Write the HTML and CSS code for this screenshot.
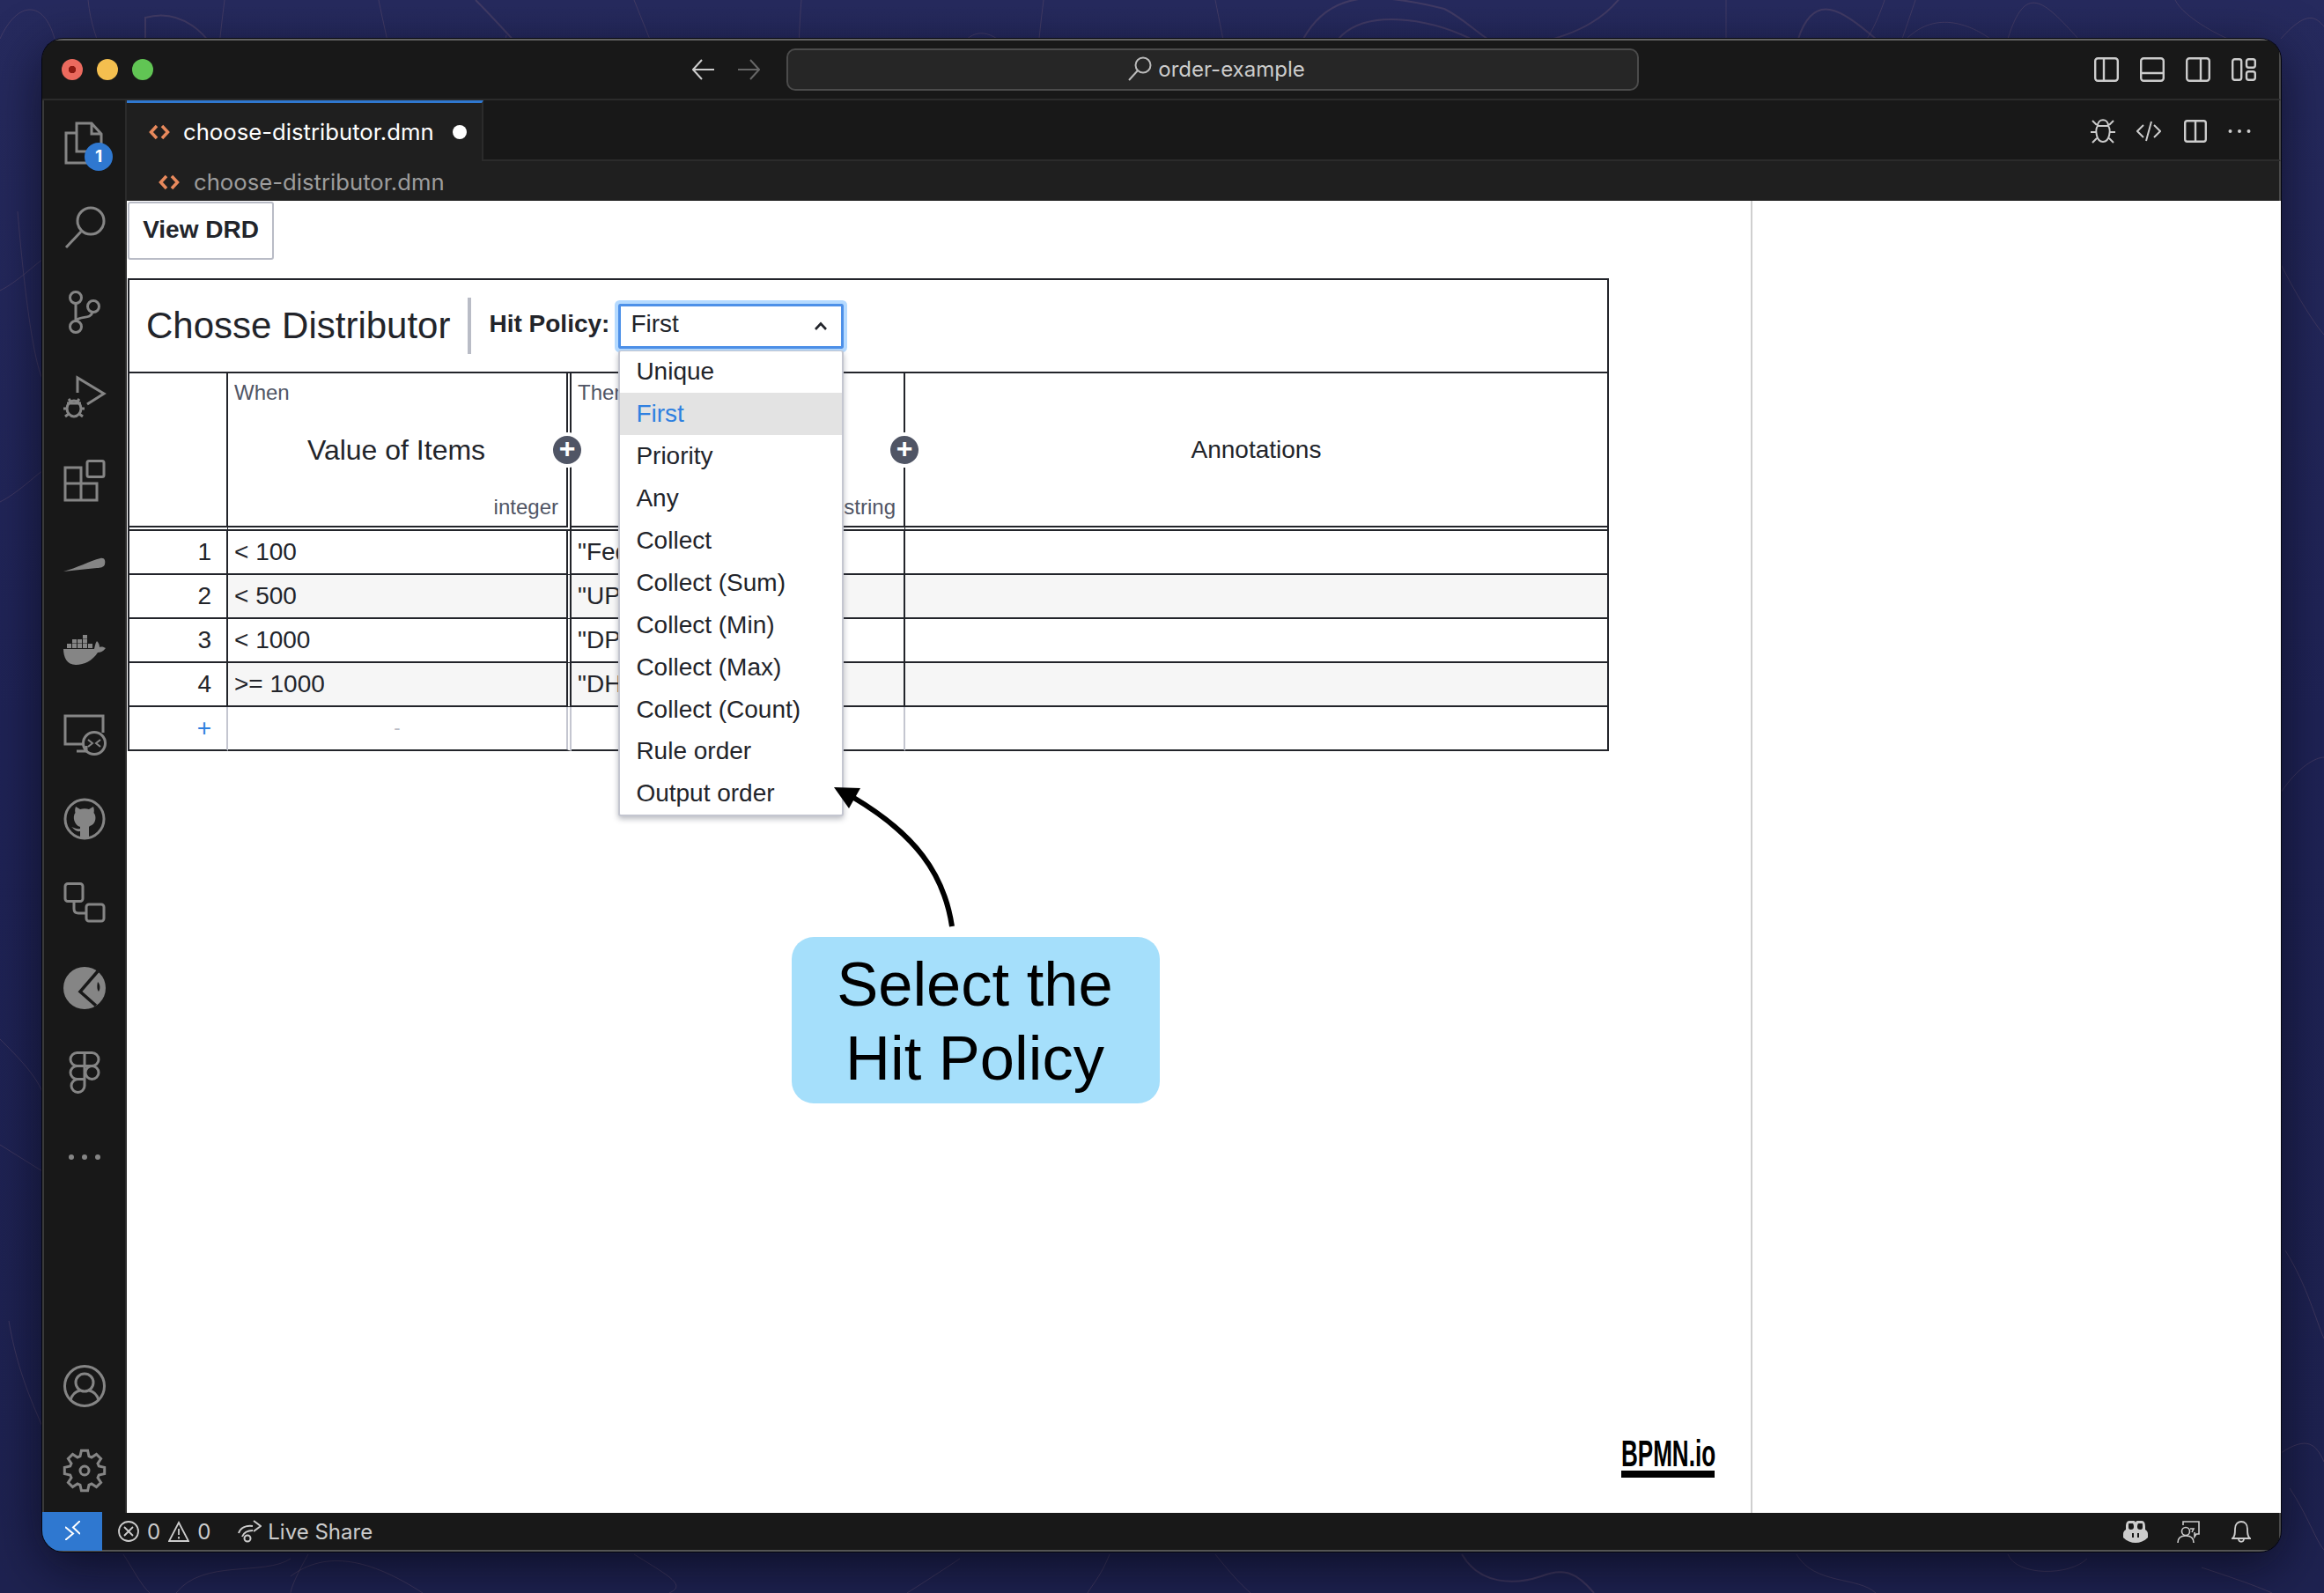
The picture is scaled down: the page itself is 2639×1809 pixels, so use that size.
FILE: index.html
```html
<!DOCTYPE html>
<html lang="en">
<head>
    <meta charset="UTF-8">
    <title>choose-distributor.dmn - order-example</title>
    <link rel="stylesheet" href="styles.css">
</head>
<body>
    <svg class="wallpaper" width="2639" height="1809" fill="none" stroke="#6b5670" stroke-opacity="0.4">
        <path d="M0 44C20 0 50 0 62 44"/>
        <path d="M100 0C105 50 130 90 150 110"/>
        <path d="M165 70V20C200 10 240 30 258 90" stroke-width="2"/>
        <path d="M255 0C250 40 245 80 245 130"/>
        <path d="M430 0C440 50 460 130 480 220"/>
        <path d="M540 0C600 60 700 180 740 220" stroke-width="2"/>
        <path d="M575 40C560 100 560 180 565 220"/>
        <path d="M580 220C590 170 620 140 640 220"/>
        <path d="M720 0C760 100 790 170 800 220"/>
        <path d="M892 220C920 100 1000 90 1035 220" stroke-width="2"/>
        <path d="M910 0C905 60 905 150 910 220"/>
        <path d="M1043 220C1070 60 1100 -30 1178 100C1195 150 1205 200 1210 220"/>
        <path d="M1185 0C1175 80 1170 160 1165 220"/>
        <path d="M1380 0C1400 100 1415 180 1420 220"/>
        <path d="M1480 44C1510 -10 1560 -10 1640 10C1680 30 1700 70 1740 50C1790 40 1830 20 1851 -20" stroke-width="2"/>
        <path d="M1520 44C1550 10 1620 20 1670 44" stroke-width="2"/>
        <path d="M1960 0V44M2140 0C2130 30 2120 44 2120 44M2175 0C2165 30 2160 44 2160 44"/>
        <path d="M2042 44C2060 -10 2090 10 2130 44" stroke-width="2"/>
        <path d="M2165 44C2200 10 2240 30 2260 44"/>
        <path d="M2280 44C2300 -20 2320 0 2360 44"/>
        <path d="M2470 0C2480 20 2520 40 2530 44M2590 44C2620 10 2630 20 2639 30"/>
        <path d="M0 330C20 320 40 300 48 295M0 570C20 560 40 540 48 535M20 240C25 300 35 400 48 430"/>
        <path d="M0 1180C20 1200 40 1220 48 1240M0 1300L48 1330M10 1500C20 1560 40 1600 48 1620"/>
        <path d="M2590 300C2610 340 2630 370 2639 380M2590 900C2610 870 2630 860 2639 860M2595 1420C2620 1460 2630 1500 2639 1520"/>
        <path d="M2590 1650C2620 1630 2630 1640 2639 1660M2600 1690C2620 1720 2630 1750 2639 1760"/>
        <path d="M140 1765C150 1780 160 1800 170 1809M200 1809C230 1770 300 1790 330 1770"/>
        <path d="M330 1790C370 1760 420 1770 480 1809M350 1765C330 1800 330 1809 330 1809"/>
        <path d="M720 1765C760 1790 780 1800 760 1809M1030 1809C1060 1790 1090 1770 1090 1770"/>
        <path d="M1260 1765C1250 1790 1240 1800 1235 1809M1380 1765C1400 1790 1410 1800 1420 1809"/>
        <path d="M1660 1765C1680 1800 1720 1800 1750 1790C1775 1780 1790 1785 1810 1809" stroke-width="2"/>
        <path d="M2040 1765C2060 1800 2110 1790 2130 1809M2280 1765C2290 1790 2350 1790 2370 1770"/>
        <path d="M2500 1780C2530 1790 2560 1800 2580 1809"/>
    </svg>

    <div class="window">
        <header class="titlebar">
            <div class="traffic">
                <span class="light light-red"></span>
                <span class="light light-yellow"></span>
                <span class="light light-green"></span>
            </div>
            <div class="history">
                <svg width="26" height="26" viewBox="0 0 26 26" fill="none" stroke="#ccc" stroke-width="2"><path d="M1 13H25M11 2L1 13L11 24"/></svg>
                <svg width="26" height="26" viewBox="0 0 26 26" fill="none" stroke="#666" stroke-width="2"><path d="M1 13H25M15 2L25 13L15 24"/></svg>
            </div>
            <div class="search-box">
                <svg width="28" height="28" viewBox="0 0 28 28" fill="none" stroke="#bbb" stroke-width="2"><circle cx="18" cy="10" r="8.5"/><path d="M12 16L2 27"/></svg>
                <span>order-example</span>
            </div>
            <div class="layout-icons">
                <svg width="28" height="28" viewBox="0 0 28 28" fill="none" stroke="#ccc" stroke-width="2.4"><rect x="1.2" y="1.2" width="25.6" height="25.6" rx="3"/><path d="M11 1V27"/></svg>
                <svg width="28" height="28" viewBox="0 0 28 28" fill="none" stroke="#ccc" stroke-width="2.4"><rect x="1.2" y="1.2" width="25.6" height="25.6" rx="3"/><path d="M1 18H27"/></svg>
                <svg width="28" height="28" viewBox="0 0 28 28" fill="none" stroke="#ccc" stroke-width="2.4"><rect x="1.2" y="1.2" width="25.6" height="25.6" rx="3"/><path d="M17 1V27"/></svg>
                <svg width="28" height="28" viewBox="0 0 28 28" fill="none" stroke="#ccc" stroke-width="2.4"><rect x="1.2" y="2.2" width="10" height="23.6" rx="2.5"/><rect x="17" y="2.2" width="9.8" height="9.5" rx="2.5"/><rect x="17" y="16.3" width="9.8" height="9.5" rx="2.5"/></svg>
            </div>
        </header>

        <div class="main">
            <aside class="activity">
                <div class="act-item">
                    <svg class="act-icon" viewBox="0 0 48 48"><path d="M15 2H32L43 14V34H15ZM32 2V14H43M15 13H3V47H30V34"/></svg>
                    <span class="badge">1</span>
                </div>
                <div class="act-item">
                    <svg class="act-icon" viewBox="0 0 48 48"><circle cx="31" cy="17" r="15"/><path d="M20 29L3 47"/></svg>
                </div>
                <div class="act-item">
                    <svg class="act-icon" viewBox="0 0 48 48"><circle cx="14" cy="8" r="6.5"/><circle cx="14" cy="41" r="6.5"/><circle cx="34" cy="18" r="6.5"/><path d="M14 14.5V34.5M33 24.5C31 33 20 28 14 34"/></svg>
                </div>
                <div class="act-item">
                    <svg class="act-icon" viewBox="0 0 48 48"><path d="M16 20V3L46 21L27 33"/><ellipse cx="12" cy="38" rx="8" ry="9"/><path d="M6 27L9 31M18 27L15 31M0 38H4M20 38H24M2 47L6 44M22 47L18 44M4 32H20"/></svg>
                </div>
                <div class="act-item">
                    <svg class="act-icon" viewBox="0 0 48 48"><path d="M2 9H20V27H38V46H2ZM2 27H20V46"/><rect x="27" y="1.5" width="19" height="18" rx="2"/></svg>
                </div>
                <div class="act-item">
                    <svg class="act-fill" viewBox="0 0 48 48"><path d="M0 31C15 27 30 19 42 16C47 15 48 19 47 23C46 26 42 27 38 27C25 28 12 30 0 31Z"/></svg>
                </div>
                <div class="act-item">
                    <svg class="act-fill" viewBox="0 0 48 48"><path d="M0 23H35C36 19 36 17 38 14C40 16 41 18 41 21C44 20 46 21 48 22C45 26 42 27 39 27C33 36 24 41 14 41C4 41 0 32 0 23Z"/><path d="M4 17h5v5h-5zM10 17h5v5h-5zM16 17h5v5h-5zM22 17h5v5h-5zM28 17h5v5h-5zM10 12h5v4.500h-5zM16 12h5v4.500h-5zM22 12h5v4.500h-5zM22 7h5v4.500h-5z"/></svg>
                </div>
                <div class="act-item">
                    <svg class="act-icon" viewBox="0 0 48 48"><path d="M22 35H2V3H45V22M15 43H26V37"/><circle cx="35" cy="34" r="12.500"/><path d="M28 30L33 34L28 38M42 30L37 34L42 38" stroke-width="2"/></svg>
                </div>
                <div class="act-item">
                    <svg class="act-icon" viewBox="0 0 48 48"><circle cx="24" cy="24" r="22"/><path class="act-solid" d="M14 10L19 13C22 12 26 12 29 13L34 10C35 13 35 15 34.500 17C38 21 37 30 30 32L29 33V45H19V38C14 39 12 35 9 33C13 34 15 36 19 35V33C12 31 10 21 13.500 17C13 15 13 13 14 10Z"/></svg>
                </div>
                <div class="act-item">
                    <svg class="act-icon" viewBox="0 0 48 48"><rect x="2" y="1.500" width="20" height="20" rx="3"/><rect x="26" y="25" width="20" height="19" rx="3"/><path d="M12 21.500V30Q12 35 17 35H26"/></svg>
                </div>
                <div class="act-item">
                    <svg class="act-fill" viewBox="0 0 48 48"><circle cx="24" cy="24" r="24"/><path d="M39 5L19 28L37 44" fill="none" stroke="#181818" stroke-width="3.500"/><path d="M39 17C42 20 42 25 40 28C38 26 38 21 39 17Z" fill="#181818"/></svg>
                </div>
                <div class="act-item">
                    <svg class="act-icon" viewBox="0 0 48 48"><path d="M24 1.500H15.500A7.500 7.500 0 0 0 15.500 16.500H24ZM24 1.500H32.500A7.500 7.500 0 0 1 32.500 16.500H24ZM24 16.500H15.500A7.500 7.500 0 0 0 15.500 31.500H24ZM24 31.500V39A7.500 7.500 0 1 1 16.500 31.500H24"/><circle cx="32.500" cy="24" r="7.500"/></svg>
                </div>
                <div class="act-item">
                    <svg class="act-fill" viewBox="0 0 48 48"><circle cx="9" cy="24" r="3"/><circle cx="24" cy="24" r="3"/><circle cx="39" cy="24" r="3"/></svg>
                </div>
                <div class="act-item act-bottom">
                    <svg class="act-icon" viewBox="0 0 48 48"><circle cx="24" cy="24" r="22.500"/><circle cx="24" cy="20" r="10"/><path d="M8 40C10 33 14 30 19 29M40 40C38 33 34 30 29 29"/></svg>
                </div>
                <div class="act-item">
                    <svg class="act-icon" viewBox="0 0 48 48"><polygon transform="translate(24 24)" points="3.600,22.700 5,16.300 8,15 13.500,18.600 18.600,13.500 15,8 16.300,5 22.700,3.600 22.700,-3.600 16.300,-5 15,-8 18.600,-13.500 13.500,-18.600 8,-15 5,-16.300 3.600,-22.700 -3.600,-22.700 -5,-16.300 -8,-15 -13.500,-18.600 -18.600,-13.500 -15,-8 -16.300,-5 -22.700,-3.600 -22.700,3.600 -16.300,5 -15,8 -18.600,13.500 -13.500,18.600 -8,15 -5,16.300 -3.600,22.700"/><circle cx="24" cy="24" r="5"/></svg>
                </div>
            </aside>

            <div class="editor-area">
                <div class="tabs">
                    <div class="tab">
                        <span class="file-icon">
                            <svg width="24" height="18" viewBox="0 0 24 18" fill="none" stroke="#e8895c" stroke-width="3.500"><path d="M9 2L2.500 9L9 16M15 2L21.500 9L15 16"/></svg>
                        </span>
                        <span class="tab-name">choose-distributor.dmn</span>
                        <span class="dirty"></span>
                    </div>
                    <div class="tab-actions">
                        <svg width="28" height="28" viewBox="0 0 28 28" fill="none" stroke="#ccc" stroke-width="2"><path d="M8 8C8 -1 20 -1 20 8M8 8H20C23 12 22 26 14 26C6 26 5 12 8 8ZM2 2L7 7M26 2L21 7M0 15H6M22 15H28M2 27L7 22M26 27L21 22"/></svg>
                        <svg class="code-icon" width="28" height="28" viewBox="0 0 28 28" fill="none" stroke="#ccc" stroke-width="2"><path d="M8 7L1 14L8 21M20 7L27 14L20 21M17 3L11 25"/></svg>
                        <svg width="26" height="26" viewBox="0 0 26 26" fill="none" stroke="#ccc" stroke-width="2.400"><rect x="1.200" y="1.200" width="23.600" height="23.600" rx="2.500"/><path d="M13 1V25"/></svg>
                        <svg width="26" height="26" viewBox="0 0 26 26" fill="#ccc"><circle cx="2.500" cy="13" r="2"/><circle cx="13" cy="13" r="2"/><circle cx="23.500" cy="13" r="2"/></svg>
                    </div>
                </div>
                <div class="breadcrumb">
                    <svg width="24" height="18" viewBox="0 0 24 18" fill="none" stroke="#e8895c" stroke-width="3.500"><path d="M9 2L2.500 9L9 16M15 2L21.500 9L15 16"/></svg>
                    <span>choose-distributor.dmn</span>
                </div>

                <div class="editor">
                    <div class="dmn-pane">
                        <button class="view-drd">View DRD</button>

                        <div class="decision">
                            <div class="decision-head">
                                <h1 class="decision-name">Chosse Distributor</h1>
                                <span class="head-divider"></span>
                                <span class="policy-label">Hit Policy:</span>
                                <div class="policy">
                                    <div class="policy-select">
                                        <span>First</span>
                                        <svg width="16" height="10" viewBox="0 0 16 10" fill="none" stroke="#22242a" stroke-width="2.600"><path d="M2 9L8 2.500L14 9"/></svg>
                                    </div>
                                    <ul class="policy-menu">
                                        <li>Unique</li>
                                        <li class="selected">First</li>
                                        <li>Priority</li>
                                        <li>Any</li>
                                        <li>Collect</li>
                                        <li>Collect (Sum)</li>
                                        <li>Collect (Min)</li>
                                        <li>Collect (Max)</li>
                                        <li>Collect (Count)</li>
                                        <li>Rule order</li>
                                        <li>Output order</li>
                                    </ul>
                                </div>
                            </div>

                            <table class="rules">
                                <colgroup>
                                    <col class="col-num">
                                    <col class="col-when">
                                    <col class="col-then">
                                    <col>
                                </colgroup>
                                <thead>
                                    <tr>
                                        <th></th>
                                        <th class="col-double">
                                            <div class="clause">
                                                <span class="clause-kind">When</span>
                                                <span class="clause-name">Value of Items</span>
                                                <span class="clause-type">integer</span>
                                            </div>
                                            <span class="add-col">+</span>
                                        </th>
                                        <th>
                                            <div class="clause">
                                                <span class="clause-kind">Then</span>
                                                <span class="clause-name"></span>
                                                <span class="clause-type">string</span>
                                            </div>
                                            <span class="add-col">+</span>
                                        </th>
                                        <th class="annotations">Annotations</th>
                                    </tr>
                                </thead>
                                <tbody>
                                    <tr>
                                        <td class="num">1</td>
                                        <td class="col-double">&lt; 100</td>
                                        <td>"Fed</td>
                                        <td></td>
                                    </tr>
                                    <tr>
                                        <td class="num">2</td>
                                        <td class="col-double">&lt; 500</td>
                                        <td>"UPS"</td>
                                        <td></td>
                                    </tr>
                                    <tr>
                                        <td class="num">3</td>
                                        <td class="col-double">&lt; 1000</td>
                                        <td>"DPD"</td>
                                        <td></td>
                                    </tr>
                                    <tr>
                                        <td class="num">4</td>
                                        <td class="col-double">&gt;= 1000</td>
                                        <td>"DHL"</td>
                                        <td></td>
                                    </tr>
                                    <tr class="add-row">
                                        <td class="num add-rule">+</td>
                                        <td class="col-double dash">-</td>
                                        <td></td>
                                        <td></td>
                                    </tr>
                                </tbody>
                            </table>
                        </div>

                        <svg class="arrow" width="150" height="170" viewBox="0 0 150 170" fill="none">
                            <path d="M137 160C128 100 95 55 24 13" stroke="#000" stroke-width="6"/>
                            <path d="M3 2L33 3L20 26Z" fill="#000"/>
                        </svg>
                        <div class="callout">Select the<br>Hit Policy</div>

                        <div class="bpmn-logo">
                            <span>BPMN.io</span>
                        </div>
                    </div>
                    <div class="side-pane"></div>
                </div>
            </div>
        </div>

        <footer class="statusbar">
            <div class="remote">
                <svg width="17" height="22" viewBox="0 0 17 22" fill="none" stroke="#fff" stroke-width="2"><path d="M0 7L9 14.500L0 22M17 0L9 7.500L17 15"/></svg>
            </div>
            <div class="status-item status-problems">
                <svg width="24" height="24" viewBox="0 0 24 24" fill="none" stroke="#ccc" stroke-width="1.800"><circle cx="12" cy="12" r="11"/><path d="M7 7L17 17M17 7L7 17"/></svg>
                <span>0</span>
                <svg width="24" height="24" viewBox="0 0 24 24" fill="none" stroke="#ccc" stroke-width="1.800"><path d="M12 2L23 23H1ZM12 9V16M12 18V20.500"/></svg>
                <span>0</span>
            </div>
            <div class="status-item status-share">
                <svg width="27" height="26" viewBox="0 0 27 26" fill="none" stroke="#ccc" stroke-width="2"><path d="M1 15C3 9 9 6 17 7M18 1L26 7L18 13M5 19C7 14 11 12 17 12"/><circle cx="11" cy="21" r="3.500"/></svg>
                <span>Live Share</span>
            </div>
            <div class="status-right">
                <svg width="28" height="25" viewBox="0 0 28 25" fill="#ccc"><path d="M7 0H12C13 0 14 1 14 2C14 1 15 0 16 0H21C24 0 25 3 25 7V10C27 11 28 13 28 15V19C24 23 19 25 14 25C9 25 4 23 0 19V15C0 13 1 11 3 10V7C3 3 4 0 7 0Z"/><path d="M6.500 3H10.500C11.500 3 12 5 12 7C12 9 11 10 8.500 10C6.500 10 6 9 6 7C6 5 6 3 6.500 3ZM17.500 3H21.500C22 3 22 5 22 7C22 9 21.500 10 19.500 10C17 10 16 9 16 7C16 5 16.500 3 17.500 3ZM10 14H12V19H10ZM16 14H18V19H16Z" fill="#181818"/></svg>
                <svg width="26" height="25" viewBox="0 0 26 25" fill="none" stroke="#ccc" stroke-width="1.600"><path d="M7 5V1H25V15H22L20 18V13"/><circle cx="10" cy="12" r="4.500"/><path d="M1 25C1 19 5 17 10 17C15 17 19 19 19 25M15 9L19 9L17 13"/></svg>
                <svg class="bell" width="22" height="25" viewBox="0 0 22 25" fill="none" stroke="#ccc" stroke-width="1.800"><path d="M1 20C4 18 4 14 4 9C4 4 7 1 11 1C15 1 18 4 18 9C18 14 18 18 21 20ZM8 20C8 25 14 25 14 20"/></svg>
            </div>
        </footer>
    </div>
</body>
</html>
```

FILE: styles.css
```css
* {
    box-sizing: border-box;
}
html, body {
    margin: 0;
    padding: 0;
    height: 1809px;
    overflow: hidden;
}
body {
    position: relative;
    background: linear-gradient(180deg, #262a5e 0%, #1f2356 45%, #1e2250 100%);
    font-family: "Liberation Sans", Arial, sans-serif;
    padding: 44px 0 0 48px;
}
.wallpaper {
    position: absolute;
    top: 0;
    left: 0;
}

/* window */
.window {
    position: relative;
    z-index: 1;
    width: 2542px;
    height: 1718px;
    display: flex;
    flex-direction: column;
    border-radius: 24px;
    overflow: hidden;
    background: #181818;
    font-family: Inter, "Liberation Sans", sans-serif;
    color: #ccc;
}
body::after {
    content: '';
    position: absolute;
    left: 48px;
    top: 44px;
    width: 2542px;
    height: 1718px;
    border-radius: 24px;
    box-shadow: 0 0 0 1px #05060f, 0 16px 60px rgba(4, 5, 16, 0.65);
    z-index: 0;
    pointer-events: none;
}

/* title bar */
.titlebar {
    height: 70px;
    flex: none;
    display: grid;
    grid-template-columns: 738px 107px 968px 1fr;
    align-items: center;
    border-top: 2px solid #626262;
    border-right: 2px solid #4a4a4a;
    border-bottom: 2px solid #2b2b2b;
    background: #181818;
}
.traffic {
    display: flex;
    gap: 16px;
    padding-left: 22px;
}
.light {
    width: 24px;
    height: 24px;
    border-radius: 50%;
}
.light-red {
    background: radial-gradient(circle, #8e1a12 0 4px, #ec6a5e 4.500px);
}
.light-yellow {
    background: #f4bf4f;
}
.light-green {
    background: #61c554;
}
.history {
    display: flex;
    gap: 25px;
}
.search-box {
    height: 48px;
    display: flex;
    align-items: center;
    justify-content: center;
    gap: 7px;
    padding-left: 8px;
    background: #262626;
    border: 2px solid #4b4b4b;
    border-radius: 10px;
    font-size: 24px;
    padding-bottom: 2px;
}
.layout-icons {
    display: flex;
    justify-content: flex-end;
    gap: 24px;
    padding-right: 26px;
}

/* body of the window */
.main {
    flex: 1;
    display: flex;
    min-height: 0;
}
.activity {
    width: 96px;
    flex: none;
    display: flex;
    flex-direction: column;
    border-left: 2px solid #3a3a3a;
    border-right: 2px solid #2b2b2b;
}
.act-item {
    position: relative;
    height: 96px;
    flex: none;
    display: flex;
    align-items: center;
    justify-content: center;
}
.act-bottom {
    margin-top: auto;
}
.act-icon, .act-fill {
    width: 48px;
    height: 48px;
    overflow: visible;
}
.act-icon {
    fill: none;
    stroke: #858585;
    stroke-width: 3;
}
.act-fill {
    fill: #858585;
}
.act-icon .act-solid {
    fill: #858585;
    stroke: none;
}
.badge {
    position: absolute;
    left: 46px;
    top: 48px;
    width: 32px;
    height: 32px;
    border-radius: 50%;
    background: #2f78d0;
    color: #fff;
    font-size: 19px;
    font-weight: 700;
    line-height: 32px;
    text-align: center;
}

.editor-area {
    flex: 1;
    min-width: 0;
    display: flex;
    flex-direction: column;
}
.tabs {
    height: 69px;
    flex: none;
    display: flex;
    align-items: stretch;
    border-bottom: 2px solid #2b2b2b;
    border-right: 2px solid #4a4a4a;
}
.tab {
    width: 405px;
    height: 69px;
    display: flex;
    align-items: center;
    padding-left: 25px;
    padding-bottom: 1px;
    background: #1f1f1f;
    border-top: 3px solid #2f78d0;
    border-right: 2px solid #2b2b2b;
    color: #fff;
    font-size: 25.700px;
}
.file-icon {
    display: flex;
}
.tab-name {
    margin-left: 15px;
}
.dirty {
    width: 16px;
    height: 16px;
    margin-left: 21px;
    border-radius: 50%;
    background: #fff;
}
.tab-actions {
    margin-left: auto;
    display: flex;
    align-items: center;
    gap: 24px;
    padding-right: 32px;
    padding-top: 2px;
}
.code-icon {
    margin-right: 2px;
}
.breadcrumb {
    height: 45px;
    flex: none;
    display: flex;
    align-items: center;
    gap: 16px;
    padding-left: 36px;
    padding-top: 2px;
    background: #1f1f1f;
    border-right: 2px solid #4a4a4a;
    color: #9d9d9d;
    font-size: 25.700px;
}

/* dmn editor */
.editor {
    flex: 1;
    display: flex;
    min-height: 0;
    background: #fff;
}
.dmn-pane {
    position: relative;
    width: 1844px;
    flex: none;
    color: #22242a;
    font-family: "Liberation Sans", Arial, sans-serif;
}
.side-pane {
    flex: 1;
    border-left: 2px solid #cfcfcf;
}
.view-drd {
    display: block;
    width: 166px;
    height: 66px;
    margin: 1px 0 0 1px;
    padding: 0 0 2px;
    background: #fff;
    border: 2px solid #b9bcc6;
    border-radius: 3px;
    color: #22242a;
    font-family: "Liberation Sans", Arial, sans-serif;
    font-size: 28px;
    font-weight: 700;
}
.decision {
    width: 1682px;
    margin: 21px 0 0 1px;
    border: 2px solid #22242a;
    border-bottom: 0;
}
.decision-head {
    height: 106px;
    display: flex;
    align-items: center;
    padding: 0 0 0 19px;
    border-bottom: 2px solid #22242a;
}
.decision-name {
    margin: 0;
    font-size: 42px;
    font-weight: 400;
}
.head-divider {
    width: 4px;
    height: 64px;
    margin: 0 20px 0 20px;
    background: #b9bcc6;
}
.policy-label {
    font-size: 28px;
    font-weight: 700;
    margin: -4px 10px 0 0;
}
.policy {
    position: relative;
}
.policy-select {
    width: 256px;
    height: 51px;
    display: flex;
    align-items: center;
    justify-content: space-between;
    padding: 0 15px 5px 11px;
    border: 3px solid #4d90e8;
    box-shadow: 0 0 0 4px #b5daff;
    border-radius: 2px;
    font-size: 28px;
}
.policy-select svg {
    margin-top: 5px;
}
.policy-menu {
    position: absolute;
    top: 53px;
    left: 0;
    width: 256px;
    margin: 0;
    padding: 0;
    list-style: none;
    background: #fff;
    border: 2px solid #c4c6d0;
    border-top-width: 1px;
    border-radius: 3px;
    box-shadow: 0 3px 6px rgba(80, 85, 101, 0.4);
    font-size: 28px;
    z-index: 2;
}
.policy-menu li {
    height: 47.900px;
    padding: 0 0 0 18px;
    display: flex;
    align-items: center;
}
.policy-menu .selected {
    background: #e3e3e3;
    color: #2f80e0;
}
.rules {
    width: 100%;
    table-layout: fixed;
    border-collapse: separate;
    border-spacing: 0;
    font-size: 28px;
}
.col-num {
    width: 112px;
}
.col-when {
    width: 390px;
}
.col-then {
    width: 379px;
}
.rules th {
    position: relative;
    height: 179px;
    padding: 0;
    font-weight: 400;
    border-right: 2px solid #22242a;
    border-bottom: 6px double #22242a;
}
.rules th:last-child, .rules td:last-child {
    border-right: 0;
}
.rules .col-double {
    border-right: 6px double #22242a;
}
.clause {
    height: 173px;
    display: flex;
    flex-direction: column;
    padding: 4px 9px 3px 7px;
}
.clause-kind, .clause-type {
    font-size: 24px;
    color: #505565;
    line-height: 36px;
}
.clause-kind {
    text-align: left;
}
.clause-name {
    flex: 1;
    display: flex;
    align-items: center;
    justify-content: center;
    font-size: 32px;
}
.clause-type {
    text-align: right;
}
.annotations {
    font-size: 28px;
}
.add-col {
    position: absolute;
    right: -21px;
    top: 67px;
    width: 40px;
    height: 40px;
    border-radius: 50%;
    border: 4px solid #fff;
    background: #505565;
    color: #fff;
    font-size: 32px;
    font-weight: 700;
    line-height: 29px;
    text-align: center;
    z-index: 1;
}
.rules td {
    height: 50px;
    padding: 0 0 0 7px;
    border-right: 2px solid #22242a;
    border-bottom: 2px solid #22242a;
    white-space: nowrap;
    overflow: hidden;
}
.rules tbody tr:nth-child(even) td {
    background: #f6f6f6;
}
.rules tbody tr td.num {
    background: #fff;
    padding: 0 17px 0 0;
    text-align: right;
}
.rules .add-row td {
    border-right-color: #c4c6d0;
}
.rules .add-rule {
    color: #2f80e0;
}
.rules td.dash {
    text-align: center;
    padding: 0;
    color: #b9bcc6;
    font-size: 22px;
}

/* annotation on top of the screenshot */
.arrow {
    position: absolute;
    left: 800px;
    top: 664px;
    z-index: 3;
}
.callout {
    position: absolute;
    left: 755px;
    top: 836px;
    width: 418px;
    height: 189px;
    display: flex;
    align-items: center;
    justify-content: center;
    text-align: center;
    padding: 3px 2px 0 0;
    background: #a5dffb;
    border-radius: 25px;
    color: #000;
    font-size: 70.500px;
    line-height: 84px;
}
.bpmn-logo {
    position: absolute;
    right: 41px;
    bottom: 40px;
    width: 106px;
    height: 44px;
    border-bottom: 8px solid #000;
    color: #000;
    overflow: visible;
}
.bpmn-logo span {
    display: block;
    font-family: "Liberation Sans Narrow", "Liberation Sans", sans-serif;
    font-size: 42px;
    font-weight: 700;
    line-height: 34px;
    transform: scaleX(0.62);
    transform-origin: left center;
    white-space: nowrap;
}

/* status bar */
.statusbar {
    height: 44px;
    flex: none;
    display: flex;
    align-items: center;
    background: #181818;
    border-bottom: 2px solid #555;
    border-right: 2px solid #4a4a4a;
    font-size: 24px;
    color: #ccc;
}
.remote {
    width: 68px;
    height: 44px;
    display: flex;
    align-items: center;
    justify-content: center;
    background: #2f78d0;
    padding-bottom: 2px;
}
.status-item {
    display: flex;
    align-items: center;
}
.status-problems {
    margin-left: 18px;
    gap: 9px;
}
.status-share {
    margin-left: 31px;
    gap: 7px;
}
.status-right {
    margin-left: auto;
    display: flex;
    align-items: center;
    gap: 33px;
    padding-right: 32px;
}
.bell {
    margin-left: 3px;
}
```
